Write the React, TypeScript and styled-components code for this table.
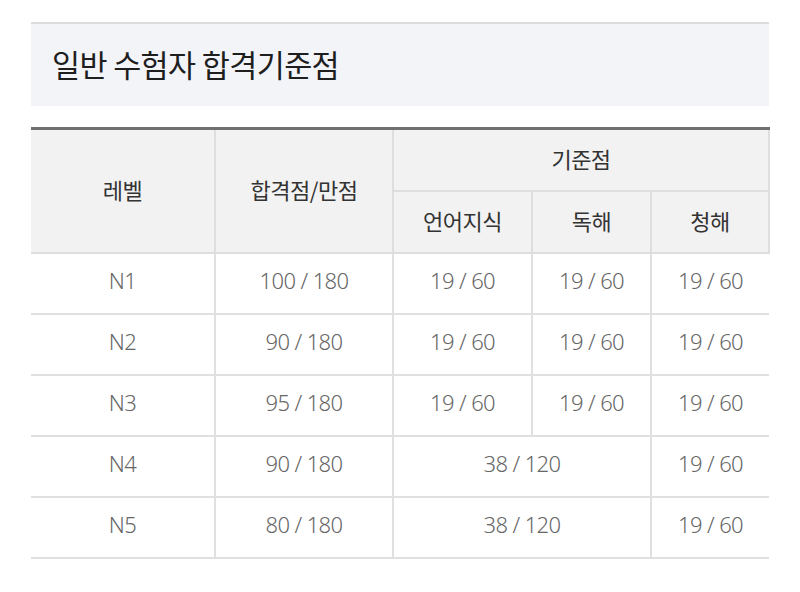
import React from 'react'
import styled, { createGlobalStyle } from 'styled-components'

const GlobalStyle = createGlobalStyle`
  body {
    margin: 0;
    background: #fff;
    font-family: 'Noto Sans CJK KR', 'Noto Sans', sans-serif;
  }
`

type Row = {
  level: string
  total: string
  cells: { value: string; span?: number }[]
}

const rows: Row[] = [
  { level: 'N1', total: '100 / 180', cells: [{ value: '19 / 60' }, { value: '19 / 60' }, { value: '19 / 60' }] },
  { level: 'N2', total: '90 / 180', cells: [{ value: '19 / 60' }, { value: '19 / 60' }, { value: '19 / 60' }] },
  { level: 'N3', total: '95 / 180', cells: [{ value: '19 / 60' }, { value: '19 / 60' }, { value: '19 / 60' }] },
  { level: 'N4', total: '90 / 180', cells: [{ value: '38 / 120', span: 2 }, { value: '19 / 60' }] },
  { level: 'N5', total: '80 / 180', cells: [{ value: '38 / 120', span: 2 }, { value: '19 / 60' }] },
]

const App: React.FC = () => (
  <StyledPage>
    <GlobalStyle />
    <StyledTitleBox>
      <StyledTitle>일반 수험자 합격기준점</StyledTitle>
    </StyledTitleBox>

    <StyledTable>
      <colgroup>
        <col style={{ width: 184 }} />
        <col style={{ width: 178 }} />
        <col style={{ width: 139 }} />
        <col style={{ width: 119 }} />
        <col style={{ width: 118 }} />
      </colgroup>
      <thead>
        <tr>
          <StyledHead rowSpan={2}>레벨</StyledHead>
          <StyledHead rowSpan={2}>합격점/만점</StyledHead>
          <StyledHead colSpan={3}>기준점</StyledHead>
        </tr>
        <tr>
          <StyledHead>언어지식</StyledHead>
          <StyledHead>독해</StyledHead>
          <StyledHead>청해</StyledHead>
        </tr>
      </thead>
      <tbody>
        {rows.map((row) => (
          <tr key={row.level}>
            <StyledCell>{row.level}</StyledCell>
            <StyledCell>{row.total}</StyledCell>
            {row.cells.map((cell, i) => (
              <StyledCell key={i} colSpan={cell.span}>
                {cell.value}
              </StyledCell>
            ))}
          </tr>
        ))}
      </tbody>
    </StyledTable>
  </StyledPage>
)

const StyledPage = styled.div`
  padding: 22px 31px 0;
`

const StyledTitleBox = styled.div`
  background: #f3f4f8;
  border-top: 2px solid #dcdcdf;
  height: 82px;
  display: flex;
  align-items: center;
  padding-left: 21px;
  margin-bottom: 21px;
`

const StyledTitle = styled.h2`
  margin: 0 0 2px;
  font-size: 30.5px;
  font-weight: 400;
  color: #1e1e1e;
  letter-spacing: -0.6px;
`

const StyledTable = styled.table`
  width: 738px;
  border-collapse: collapse;
  table-layout: fixed;
  border-top: 3px solid #707070;

  tr > *:first-child {
    border-left: none;
  }
  tbody tr > *:last-child {
    border-right: none;
  }
`

const StyledHead = styled.th`
  height: 56px;
  padding: 0 0 4px;
  background: #f2f2f2;
  border: 2px solid #dedede;
  border-top: none;
  font-size: 22px;
  font-weight: 400;
  color: #333;
  text-align: center;
  letter-spacing: -0.5px;
`

const StyledCell = styled.td`
  height: 51px;
  padding: 0 0 8px;
  border: 2px solid #e0e0e0;
  font-family: 'Noto Sans', sans-serif;
  font-size: 22px;
  font-weight: 300;
  color: #666;
  text-align: center;
  letter-spacing: -0.6px;
`

export default App
